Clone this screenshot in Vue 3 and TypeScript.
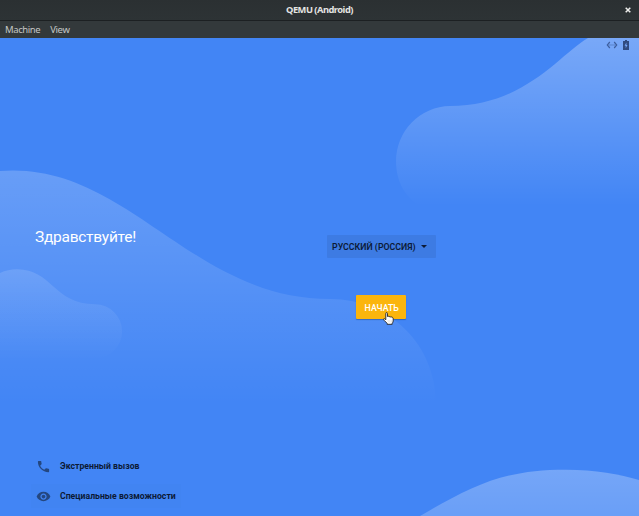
<script setup lang="ts">
interface HelpAction {
  id: string
  label: string
}

const menus: string[] = ['Machine', 'View']
const actions: HelpAction[] = [
  { id: 'call', label: 'Экстренный вызов' },
  { id: 'eye', label: 'Специальные возможности' },
]
</script>

<template>
  <div class="window">
    <header class="titlebar">
      <span class="title">QEMU (Android)</span>
      <button class="close" aria-label="Close">
        <svg width="6" height="6" viewBox="0 0 6 6"><path d="M.7.7 5.3 5.3M5.3.7.7 5.3" stroke="#eeeeec" stroke-width="1.5" /></svg>
      </button>
    </header>
    <nav class="menubar">
      <span v-for="menu in menus" :key="menu" class="menu">{{ menu }}</span>
    </nav>
    <main class="screen">
      <svg class="clouds" width="639" height="478" viewBox="0 38 639 478">
        <defs>
          <linearGradient id="g1" gradientUnits="userSpaceOnUse" x1="0" y1="38" x2="0" y2="206">
            <stop offset="0" stop-color="#fff" stop-opacity=".29" />
            <stop offset="1" stop-color="#fff" stop-opacity="0" />
          </linearGradient>
          <linearGradient id="g2" gradientUnits="userSpaceOnUse" x1="0" y1="170" x2="0" y2="404">
            <stop offset="0" stop-color="#fff" stop-opacity=".2" />
            <stop offset="1" stop-color="#fff" stop-opacity="0" />
          </linearGradient>
          <linearGradient id="g3" gradientUnits="userSpaceOnUse" x1="0" y1="269" x2="0" y2="360">
            <stop offset="0" stop-color="#fff" stop-opacity=".13" />
            <stop offset="1" stop-color="#fff" stop-opacity="0" />
          </linearGradient>
          <linearGradient id="g4" gradientUnits="userSpaceOnUse" x1="0" y1="470" x2="0" y2="680">
            <stop offset="0" stop-color="#fff" stop-opacity=".27" />
            <stop offset="1" stop-color="#fff" stop-opacity="0" />
          </linearGradient>
        </defs>
        <path fill="url(#g1)" d="M639 38H588C560 54 525 106 450 106A55 55 0 0 0 396 161C396 181 405 197 420 206H639Z" />
        <path fill="url(#g2)" d="M0 171Q7 170.5 13 170.5C131 170.5 195 299 330 299C390 299 436 345 436 404H0Z" />
        <path fill="url(#g3)" d="M0 273Q8 269.3 17 269.3C52 269.3 54 304.3 95 304.3A27 27 0 0 1 95 358.5L0 360Z" />
        <path fill="url(#g4)" d="M420 516C475 484 505 469.7 566 469.7C595 469.7 620 474 639 480V516Z" />
      </svg>

      <div class="status">
        <svg width="12" height="8" viewBox="0 0 12 8" fill="none" stroke="#3e5f9e" stroke-width="1.2">
          <path d="M3.8 1 1.3 4 3.8 7M8.2 1 10.7 4 8.2 7" />
          <path d="M3.4 4H4.5M5.5 4H6.5M7.5 4H8.6" />
        </svg>
        <svg width="6" height="10" viewBox="0 0 6 10">
          <path fill="#304b80" fill-rule="evenodd" d="M2 0H4V1H6V10H0V1H2ZM3.4 2.6 1.6 5.8H2.7V8.2L4.5 5H3.4Z" />
        </svg>
      </div>

      <h1 class="greeting">Здравствуйте!</h1>

      <section class="controls">
        <button class="language">
          <span>РУССКИЙ (РОССИЯ)</span>
          <svg width="6" height="3" viewBox="0 0 6 3"><path fill="#0c1a36" d="M0 0H6L3 3Z" /></svg>
        </button>
        <button class="start">
          <span>НАЧАТЬ</span>
          <svg class="pointer" width="11" height="13" viewBox="0 0 11 13">
            <path fill="#fff" stroke="#222" stroke-width=".9" stroke-linejoin="round" d="M2.8 7.8V1.5Q2.8.6 3.6.6T4.5 1.5V4.5Q5.4 3.9 6.1 4.7Q7.1 4.2 7.8 5.1Q8.7 4.7 9.5 5.4Q10.3 5.7 10.2 6.9V9Q10 10.5 9.2 11.2V12.3H4.1V11.3L1.2 8.4Q.2 7.2.9 6.7Q1.6 6.3 2.8 7.8Z" />
            <path stroke="#aaa" stroke-width=".3" d="M5.2 8.2V10.5M6.8 8.2V10.5M8.4 8.2V10.5" />
          </svg>
        </button>
      </section>

      <footer class="help">
        <button v-for="action in actions" :key="action.id" class="action" :class="action.id">
          <svg v-if="action.id === 'call'" width="15" height="15" viewBox="0 0 24 24">
            <path d="M6.62 10.79c1.44 2.83 3.76 5.14 6.59 6.59l2.2-2.2c.27-.27.67-.36 1.02-.24 1.12.37 2.33.57 3.57.57.55 0 1 .45 1 1V20c0 .55-.45 1-1 1-9.39 0-17-7.61-17-17 0-.55.45-1 1-1h3.5c.55 0 1 .45 1 1 0 1.25.2 2.45.57 3.57.11.35.03.74-.25 1.02z" />
          </svg>
          <svg v-else width="15" height="15" viewBox="0 0 24 24">
            <path d="M12 4.5C7 4.5 2.73 7.61 1 12c1.73 4.39 6 7.5 11 7.5s9.27-3.11 11-7.5c-1.73-4.39-6-7.5-11-7.5zM12 17c-2.76 0-5-2.24-5-5s2.24-5 5-5 5 2.24 5 5-2.24 5-5 5zm0-8c-1.66 0-3 1.34-3 3s1.34 3 3 3 3-1.34 3-3-1.34-3-3-3z" />
          </svg>
          <span>{{ action.label }}</span>
        </button>
      </footer>
    </main>
  </div>
</template>

<style>
body {
  margin: 0;
  overflow: hidden;
}
</style>

<style scoped>
.window {
  display: flex;
  flex-direction: column;
  width: 639px;
  height: 516px;
  background: #4285f5;
  font-family: Roboto, sans-serif;
}
button {
  margin: 0;
  padding: 0;
  border: 0;
  background: none;
  font: inherit;
  white-space: nowrap;
}
svg {
  display: block;
  flex: none;
}
.titlebar {
  display: grid;
  grid-template-columns: 1fr auto 1fr;
  align-items: center;
  box-sizing: border-box;
  height: 21px;
  padding-bottom: 1px;
  border-bottom: 1px solid #1c2022;
  background: linear-gradient(#2b3032, #2d3335);
  color: #e4e4e2;
  font: 700 9.3px/18px "Noto Sans", sans-serif;
}
.title {
  grid-column: 2;
  letter-spacing: -0.5px;
}
.close {
  justify-self: end;
  margin-right: 8px;
}
.menubar {
  display: flex;
  gap: 10px;
  height: 17px;
  padding-left: 5px;
  background: #33393b;
  color: #c4c7c5;
  font: 9.5px/18px "Noto Sans", sans-serif;
  letter-spacing: -0.4px;
}
.screen {
  position: relative;
  flex: 1;
  display: grid;
  grid-template-columns: 327px 1fr;
  grid-template-rows: 14px 1fr auto;
}
.clouds {
  position: absolute;
  inset: 0;
}
.status,
.greeting,
.controls,
.help {
  position: relative;
}
.status {
  grid-column: 1 / 3;
  display: flex;
  align-items: center;
  justify-content: flex-end;
  gap: 5px;
  padding-right: 10px;
}
.greeting {
  margin: 174px 0 0 35px;
  color: #fff;
  font-size: 15.5px;
  font-weight: 400;
  line-height: 22px;
  letter-spacing: -0.26px;
}
.controls {
  display: flex;
  flex-direction: column;
  align-items: center;
  align-self: start;
  gap: 37px;
  width: 108.5px;
  margin-top: 183px;
}
.language {
  display: flex;
  align-items: center;
  gap: 5px;
  box-sizing: border-box;
  width: 108.5px;
  height: 23px;
  padding: 0 0 0 5px;
  border-radius: 1px;
  background: #3d7be3;
  color: #0c1a36;
  font-size: 8.8px;
  font-weight: 600;
}
.start {
  position: relative;
  width: 50px;
  height: 24px;
  padding: 1px 0 0 1px;
  border-radius: 1px;
  background: #fbb50d;
  box-shadow: 0 1px 1px rgba(20, 50, 110, 0.4);
  color: #fff;
  font-size: 8.8px;
  font-weight: 500;
}
.pointer {
  position: absolute;
  left: 27px;
  top: 17px;
}
.help {
  grid-column: 1 / 3;
  display: flex;
  flex-direction: column;
  align-items: flex-start;
  gap: 6px;
  padding: 0 0 8px 31px;
}
.action {
  display: flex;
  align-items: center;
  gap: 9px;
  height: 24px;
  padding: 0 5px;
  border-radius: 1px;
  color: #0c1a36;
  font-size: 8.7px;
  font-weight: 700;
}
.action svg {
  fill: #244780;
}
.eye {
  background: #4184f2;
}
</style>
